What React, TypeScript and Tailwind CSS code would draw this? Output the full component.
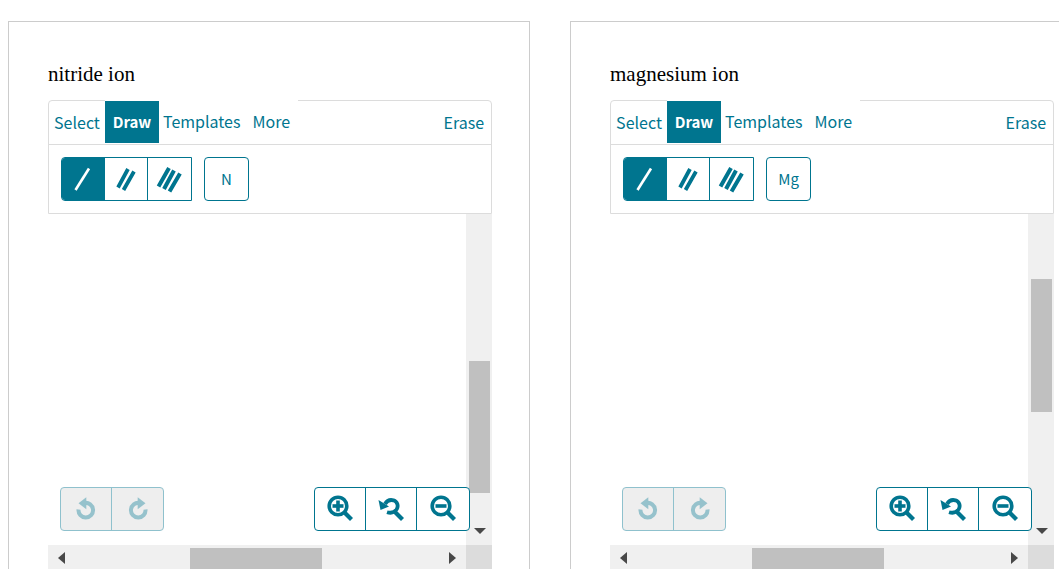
import type { ReactNode } from "react";

type Editor = {
  id: string;
  title: string;
  element: string;
  scrollBefore: number;
};

const editors: Editor[] = [
  { id: "nitride", title: "nitride ion", element: "N", scrollBefore: 44.4 },
  { id: "magnesium", title: "magnesium ion", element: "Mg", scrollBefore: 19.7 },
];

function BondIcon({ count }: { count: 1 | 2 | 3 }) {
  return (
    <svg width="30" height="30" viewBox="0 0 30 30" fill="none" stroke="currentColor" aria-hidden="true">
      {count === 1 && <path d="M7.500 26 21 4.500" strokeWidth="2.600" />}
      {count === 2 && <path d="M7 23.500 17 5M12.500 26 23 7.500" strokeWidth="3.800" />}
      {count === 3 && (
        <path d="M3.500 22.500 14 4M9 25 19 6.500M14.500 27.500 25 9.500" strokeWidth="4" />
      )}
    </svg>
  );
}

function RotateIcon({ flip = false }: { flip?: boolean }) {
  return (
    <svg width="24" height="24" viewBox="0 0 24 24" aria-hidden="true">
      <g transform={flip ? "translate(24 0) scale(-1 1)" : undefined}>
        <path d="M4.500 12.500a7.300 7.300 0 1 0 6-6.500" fill="none" stroke="currentColor" strokeWidth="4" />
        <path d="M4.500 6.200 12.300.200V12.200z" fill="currentColor" />
      </g>
    </svg>
  );
}

function MagnifierIcon({ kind }: { kind: "in" | "out" | "reset" }) {
  return (
    <svg width="28" height="28" viewBox="0 0 28 28" fill="none" stroke="currentColor" aria-hidden="true">
      {kind === "reset" ? (
        <>
          <path d="M8 9C10 5.500 13.500 4.500 16.500 5.300c4 1.300 5.300 5.800 3 9.200-2 2.800-5.500 3.900-9.500 2.700" strokeWidth="3.800" />
          <path d="M1.500 5 12 11.500 3.500 15z" fill="currentColor" stroke="none" />
        </>
      ) : (
        <>
          <circle cx="12" cy="11" r="8.800" strokeWidth="3.600" />
          <path d="M6.500 11h11" strokeWidth="3.600" />
          {kind === "in" && <path d="M12 5.500v11" strokeWidth="3.600" />}
        </>
      )}
      <path d="M18 17 25.500 24.500" strokeWidth="4.200" />
    </svg>
  );
}

function Arrow({ direction }: { direction: "left" | "right" | "down" }) {
  const paths = { left: "M9 0v12L2 6z", right: "M3 0v12l7-6z", down: "M0 3h12L6 9z" };
  return (
    <svg width="12" height="12" viewBox="0 0 12 12" fill="#484848" aria-hidden="true">
      <path d={paths[direction]} />
    </svg>
  );
}

function IconButton({ label, className, children, disabled, pressed }: {
  label: string;
  className: string;
  children: ReactNode;
  disabled?: boolean;
  pressed?: boolean;
}) {
  return (
    <button
      type="button"
      aria-label={label}
      aria-pressed={pressed}
      disabled={disabled}
      className={`flex items-center justify-center ${className}`}
    >
      {children}
    </button>
  );
}

function Toolbar({ element }: { element: string }) {
  return (
    <div className="rounded-t-sm border border-[#dcdcdc]">
      <div className="flex h-11 items-center border-b border-[#dcdcdc] pb-0.5">
        <button type="button" className="w-14 shrink-0 text-center">Select</button>
        <nav className="-mt-0.5 flex h-11 items-center bg-white" aria-label="Editor tools">
          <button type="button" className="mt-0.5 h-[42px] w-[54px] bg-[#00758f] text-center text-[15px] font-bold text-white">
            Draw
          </button>
          <button type="button" className="px-1">Templates</button>
          <button type="button" className="px-2">More</button>
        </nav>
        <button type="button" className="ml-auto pr-[7px]">Erase</button>
      </div>
      <div className="flex gap-3 px-3 py-3">
        <div className="flex h-11 divide-x divide-[#00758f] overflow-hidden rounded-l border border-[#00758f]" role="group" aria-label="Bonds">
          <IconButton label="Single bond" pressed className="w-[43px] bg-[#00758f] text-white">
            <BondIcon count={1} />
          </IconButton>
          <IconButton label="Double bond" pressed={false} className="w-[43px]">
            <BondIcon count={2} />
          </IconButton>
          <IconButton label="Triple bond" pressed={false} className="w-[43px]">
            <BondIcon count={3} />
          </IconButton>
        </div>
        <button type="button" className="h-11 w-[45px] rounded border border-[#00758f] text-[15px]">{element}</button>
      </div>
    </div>
  );
}

function Canvas({ scrollBefore }: { scrollBefore: number }) {
  return (
    <div className="relative grid min-h-0 flex-1 grid-cols-[1fr_26px] grid-rows-[1fr_24px]">
      <div className="bg-white" />
      <div className="relative flex min-h-0 flex-col bg-[#f0f0f0] pr-0.5 pl-[3px]">
        <div className="shrink-0" style={{ height: `${scrollBefore}%` }} />
        <div className="h-2/5 shrink-0 bg-[#c0c0c0]" />
        <div className="mt-auto flex justify-center pb-2">
          <Arrow direction="down" />
        </div>
      </div>
      <div className="flex items-center bg-[#f0f0f0]">
        <div className="flex w-[34%] pt-0.5 pl-2">
          <Arrow direction="left" />
        </div>
        <div className="mt-[3px] w-[31.6%] self-stretch bg-[#c0c0c0]" />
        <div className="ml-auto pt-0.5 pr-2">
          <Arrow direction="right" />
        </div>
      </div>
      <div className="bg-[#dcdcdc]" />
      <div className="absolute bottom-[38px] left-3 flex h-11 divide-x divide-[#8fc1cd] rounded border border-[#8fc1cd] bg-[#eee] text-[#96c2cc]">
        <IconButton label="Undo" disabled className="w-[51px]"><RotateIcon /></IconButton>
        <IconButton label="Redo" disabled className="w-[51px]"><RotateIcon flip /></IconButton>
      </div>
      <div className="absolute right-[22px] bottom-[38px] flex h-11 divide-x divide-[#00758f] rounded border border-[#00758f] bg-white">
        <IconButton label="Zoom in" className="w-[51px]"><MagnifierIcon kind="in" /></IconButton>
        <IconButton label="Reset zoom" className="w-[51px]"><MagnifierIcon kind="reset" /></IconButton>
        <IconButton label="Zoom out" className="w-[52px]"><MagnifierIcon kind="out" /></IconButton>
      </div>
    </div>
  );
}

export default function App() {
  return (
    <main className="grid h-screen min-h-[500px] grid-cols-[49.67%_49.67%] gap-10 overflow-hidden bg-white pt-[21px] pl-2 font-['Noto_Sans_CJK_SC',sans-serif] text-[16px] leading-5 text-[#00758f]">
      {editors.map((editor) => (
        <section
          key={editor.id}
          aria-labelledby={editor.id}
          className="flex min-h-0 flex-col border-x border-t border-[#ccc] pt-10 pr-[37px] pl-[39px]"
        >
          <h2 id={editor.id} className="mb-3.5 font-['Liberation_Serif',serif] text-[21px] leading-6 text-black">
            {editor.title}
          </h2>
          <Toolbar element={editor.element} />
          <Canvas scrollBefore={editor.scrollBefore} />
        </section>
      ))}
    </main>
  );
}
